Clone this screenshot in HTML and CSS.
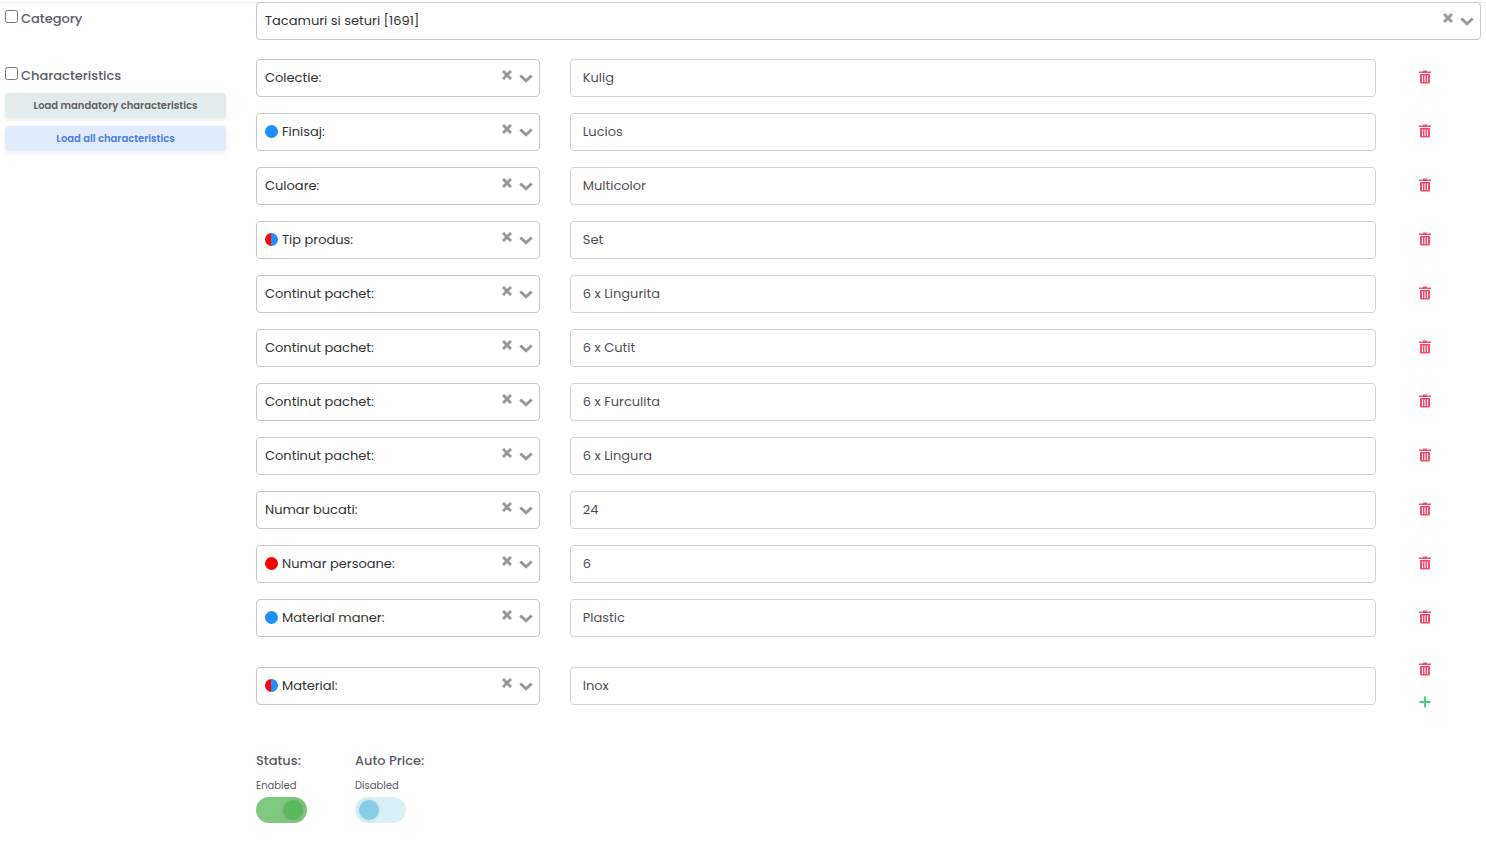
FILE: index.html
```html
<!DOCTYPE html>
<html lang="en">
<head>
    <meta charset="UTF-8">
    <meta name="viewport" content="width=device-width, initial-scale=1.0">
    <title>Edit product</title>
    <link rel="stylesheet" href="styles.css">
</head>
<body>

    <!-- Shared icons -->
    <svg class="sprite" aria-hidden="true">
        <symbol id="chevron" viewBox="0 0 14 9">
            <path d="M1.3 1.5 L7 6.8 L12.7 1.5" fill="none" stroke="currentColor" stroke-width="3"/>
        </symbol>
        <symbol id="times" viewBox="0 0 10 10">
            <path d="M1 1 L9 9 M9 1 L1 9" fill="none" stroke="currentColor" stroke-width="3"/>
        </symbol>
        <symbol id="trash" viewBox="0 0 12 14">
            <path d="M4 0.6 H8 V1.4 H12 V3 H0 V1.4 H4 Z" fill="currentColor"/>
            <path fill-rule="evenodd" d="M1 4 H11 V12.6 Q11 13.6 10 13.6 H2 Q1 13.6 1 12.6 Z M3 5.4 V12 H4 V5.4 Z M5.5 5.4 V12 H6.5 V5.4 Z M8 5.4 V12 H9 V5.4 Z" fill="currentColor"/>
        </symbol>
        <symbol id="plus" viewBox="0 0 12 12">
            <path d="M6 0.5 V11.5 M0.5 6 H11.5" fill="none" stroke="currentColor" stroke-width="2"/>
        </symbol>
    </svg>

    <form class="product-form">
        <div class="row">
            <div class="side">
                <label class="check"><input type="checkbox" name="category_on"> Category</label>
            </div>
            <div class="main">
                <div class="picker">
                    <select name="category" aria-label="Category"><option>Tacamuri si seturi [1691]</option></select>
                    <button type="button" class="clear" aria-label="Clear"><svg><use href="#times"/></svg></button>
                    <svg class="arrow"><use href="#chevron"/></svg>
                </div>
            </div>
        </div>

        <div class="row">
            <div class="side">
                <label class="check"><input type="checkbox" name="characteristics_on"> Characteristics</label>
                <button type="button" class="btn btn-mandatory">Load mandatory characteristics</button>
                <button type="button" class="btn btn-all">Load all characteristics</button>
            </div>
            <div class="main">
                <div id="characteristics" class="characteristics"></div>

                <!-- Switches -->
                <div class="switches">
                    <div class="switch-group">
                        <span class="switch-title">Status:</span>
                        <label class="switch-label" for="status">Enabled</label>
                        <input type="checkbox" class="switch" id="status" checked>
                    </div>
                    <div class="switch-group">
                        <span class="switch-title">Auto Price:</span>
                        <label class="switch-label" for="auto-price">Disabled</label>
                        <input type="checkbox" class="switch" id="auto-price">
                    </div>
                </div>
            </div>
        </div>
    </form>

    <script src="script.js"></script>
</body>
</html>
```

FILE: styles.css
```css
* {
    box-sizing: border-box;
}

body {
    margin: 0;
    padding-top: 2px;
    background: #fff;
    color: #5b5b66;
    font-family: Poppins, Inter, sans-serif;
    font-size: 13px;
    line-height: 20px;
}

input, select, button {
    font-family: inherit;
}

.sprite {
    display: none;
}

.product-form {
    padding: 0 5px;
    box-shadow: inset 0 1px #eee;
}

.row {
    display: grid;
    grid-template-columns: repeat(12, 1fr);
    column-gap: 30px;
    margin-bottom: 19px;
}

.side {
    grid-column: span 2;
    display: flex;
    flex-direction: column;
    gap: 8px;
}

.main {
    grid-column: span 10;
}

.check {
    display: flex;
    gap: 3px;
    height: 26px;
    padding-top: 7px;
    font-size: 13px;
    font-weight: 500;
}

.check input {
    width: 13px;
    height: 13px;
    margin: 1px 0 0;
}

/* Side buttons */
.btn {
    height: 25px;
    padding: 0;
    border: none;
    border-radius: 4px;
    font-size: 10px;
    font-weight: 600;
    box-shadow: 0 2px 4px rgba(0, 0, 0, 0.08);
    cursor: pointer;
}

.btn-mandatory {
    background: #e2ecec;
    color: #616161;
}

.btn-all {
    background: #e1eafe;
    color: #4680e6;
}

/* Drop-down with clear button */
.picker {
    display: flex;
    align-items: center;
    height: 38px;
    padding: 0 6px 0 8px;
    border: 1px solid #c8c8c8;
    border-radius: 4px;
    background: #fff;
    color: #999;
}

.picker select {
    flex: 1;
    min-width: 0;
    height: 36px;
    padding: 0 0 2px;
    border: none;
    outline: none;
    appearance: none;
    background: transparent;
    color: #333;
    font-size: 13px;
}

.dot {
    width: 13px;
    height: 13px;
    margin: 0 4px 2px 0;
    border-radius: 50%;
}

.dot-blue {
    background: #1e90ff;
}

.dot-red {
    background: #f00;
}

.dot-both {
    background: linear-gradient(90deg, #f00 50%, #1e90ff 50%);
}

.clear {
    height: 20px;
    margin: 0 7px 6px 0;
    padding: 0;
    border: none;
    background: none;
    color: inherit;
    cursor: pointer;
}

.clear svg {
    display: block;
    width: 10px;
    height: 10px;
}

.arrow {
    width: 14px;
    height: 9px;
    pointer-events: none;
}

/* Characteristics */
.characteristics {
    display: grid;
    row-gap: 16px;
}

.item {
    display: grid;
    grid-template-columns: repeat(12, 1fr);
    column-gap: 30px;
    align-items: center;
}

.item .picker {
    grid-column: span 3;
}

.value {
    grid-column: span 8;
    width: 100%;
    height: 38px;
    padding: 0 12px;
    border: 1px solid #ced4da;
    border-radius: 4px;
    background: #fff;
    color: #505058;
    font-size: 13px;
}

.actions {
    display: flex;
    flex-direction: column;
}

.icon-btn {
    display: flex;
    align-items: center;
    justify-content: center;
    width: 38px;
    height: 33px;
    padding: 0 0 2px;
    border: none;
    background: none;
    cursor: pointer;
}

.icon-btn svg {
    width: 12px;
    height: 14px;
}

.remove {
    color: #f34e6e;
}

.add {
    color: #47d27e;
}

/* Switches */
.switches {
    display: flex;
    gap: 48px;
    margin-top: 32px;
}

.switch-group {
    display: flex;
    flex-direction: column;
    min-width: 51px;
}

.switch-title {
    font-size: 13px;
    font-weight: 500;
}

.switch-label {
    margin: 5px 0 1px;
    font-size: 10px;
}

.switch {
    appearance: none;
    width: 51px;
    height: 26px;
    margin: 0;
    padding: 3px 4px;
    border-radius: 13px;
    background: #daf0f7;
    cursor: pointer;
}

.switch::before {
    content: "";
    display: block;
    width: 20px;
    height: 20px;
    border-radius: 50%;
    background: #85cfe6;
    box-shadow: 0 0 4px rgba(0, 0, 0, 0.1);
}

.switch:checked {
    background: #80c780;
}

.switch:checked::before {
    margin-left: auto;
    background: #5cb85c;
}
```

FILE: script.js
```js
const items = [
    { name: 'Colectie:', value: 'Kulig' },
    { name: 'Finisaj:', value: 'Lucios', dot: 'blue' },
    { name: 'Culoare:', value: 'Multicolor' },
    { name: 'Tip produs:', value: 'Set', dot: 'both' },
    { name: 'Continut pachet:', value: '6 x Lingurita' },
    { name: 'Continut pachet:', value: '6 x Cutit' },
    { name: 'Continut pachet:', value: '6 x Furculita' },
    { name: 'Continut pachet:', value: '6 x Lingura' },
    { name: 'Numar bucati:', value: '24' },
    { name: 'Numar persoane:', value: '6', dot: 'red' },
    { name: 'Material maner:', value: 'Plastic', dot: 'blue' },
    { name: 'Material:', value: 'Inox', dot: 'both' }
];

// Only the last row gets the add button
function renderItem(item, index) {
    const dot = item.dot ? `<span class="dot dot-${item.dot}"></span>` : '';
    const add = index === items.length - 1
        ? '<button type="button" class="icon-btn add" aria-label="Add"><svg><use href="#plus"/></svg></button>'
        : '';

    return `
        <div class="item">
            <div class="picker">
                ${dot}
                <select aria-label="Characteristic"><option>${item.name}</option></select>
                <button type="button" class="clear" aria-label="Clear"><svg><use href="#times"/></svg></button>
                <svg class="arrow"><use href="#chevron"/></svg>
            </div>
            <input type="text" class="value" value="${item.value}" aria-label="${item.name}">
            <div class="actions">
                <button type="button" class="icon-btn remove" aria-label="Delete"><svg><use href="#trash"/></svg></button>
                ${add}
            </div>
        </div>`;
}

document.getElementById('characteristics').innerHTML = items.map(renderItem).join('');
```
